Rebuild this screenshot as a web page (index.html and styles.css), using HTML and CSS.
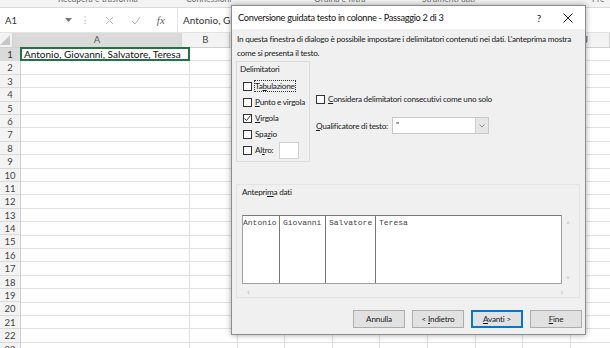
FILE: index.html
```html
<!DOCTYPE html>
<html lang="it">
<head>
    <meta charset="UTF-8">
    <meta name="viewport" content="width=device-width, initial-scale=1.0">
    <title>Conversione guidata testo in colonne</title>
    <link rel="stylesheet" href="styles.css">
</head>
<body>
    <div class="ribbon">
        <span class="grp g1">Recupera e trasforma</span>
        <span class="grp g2">Connessioni</span>
        <span class="grp g3">Ordina e filtra</span>
        <span class="grp g4">Strumenti dati</span>
        <span class="grp g5">Pre</span>
    </div>

    <div class="fbar">
        <div class="namebox">
            <span>A1</span>
            <svg width="7" height="4" viewBox="0 0 7 4"><path d="M0 0h7L3.5 4z" fill="#777"/></svg>
        </div>
        <span class="dots">⁝</span>
        <div class="fxbtns">
            <svg width="9" height="9" viewBox="0 0 9 9"><path d="M1 1l7 7M8 1L1 8" stroke="#b5b5b5" stroke-width="1"/></svg>
            <svg width="10" height="9" viewBox="0 0 10 9"><path d="M1 5l3 3 5-7" stroke="#b5b5b5" stroke-width="1" fill="none"/></svg>
            <span class="fx">fx</span>
        </div>
        <div class="finput">Antonio, Giovanni, Salvatore, Teresa</div>
    </div>

    <div class="colheads">
        <div class="corner"><svg width="10" height="10" viewBox="0 0 10 10"><path d="M10 0v10H0z" fill="#c8c8c8"/></svg></div>
        <div class="ch cha sel">A</div>
        <div class="ch">B</div>
        <div class="ch">C</div>
        <div class="ch">D</div>
        <div class="ch">E</div>
        <div class="ch">F</div>
        <div class="ch">G</div>
        <div class="ch">H</div>
        <div class="ch">I</div>
        <div class="ch">J</div>
    </div>

    <div class="sheet">
        <div class="rowheads">
            <div class="rh sel">1</div><div class="rh">2</div><div class="rh">3</div><div class="rh">4</div>
            <div class="rh">5</div><div class="rh">6</div><div class="rh">7</div><div class="rh">8</div>
            <div class="rh">9</div><div class="rh">10</div><div class="rh">11</div><div class="rh">12</div>
            <div class="rh">13</div><div class="rh">14</div><div class="rh">15</div><div class="rh">16</div>
            <div class="rh">17</div><div class="rh">18</div><div class="rh">19</div><div class="rh">20</div>
            <div class="rh">21</div><div class="rh">22</div><div class="rh">23</div>
        </div>
        <div class="cells">
            <div class="col cola">
                <div class="active">Antonio, Giovanni, Salvatore, Teresa</div>
            </div>
            <div class="col"></div><div class="col"></div><div class="col"></div><div class="col"></div>
            <div class="col"></div><div class="col"></div><div class="col"></div><div class="col"></div>
            <div class="col"></div>
        </div>
    </div>

    <div class="dialog">
        <div class="titlebar">
            <span class="title">Conversione guidata testo in colonne - Passaggio 2 di 3</span>
            <span class="help">?</span>
            <svg class="close" width="10" height="10" viewBox="0 0 10 10"><path d="M0.5 0.5l9 9M9.5 0.5l-9 9" stroke="#222" stroke-width="1"/></svg>
        </div>

        <p class="desc">In questa finestra di dialogo è possibile impostare i delimitatori contenuti nei dati. L'anteprima mostra come si presenta il testo.</p>

        <div class="options">
            <div class="group delim">
                <div class="glabel">Delimitatori</div>
                <label class="chk"><span class="box"></span><span class="focus">Ta<u>b</u>ulazione</span></label>
                <label class="chk"><span class="box"></span><span><u>P</u>unto e virgola</span></label>
                <label class="chk"><span class="box"><svg width="9" height="9" viewBox="0 0 9 9"><path d="M1.5 4.5l2 2 4-5" stroke="#222" stroke-width="0.9" fill="none"/></svg></span><span><u>V</u>irgola</span></label>
                <label class="chk"><span class="box"></span><span>Spa<u>z</u>io</span></label>
                <label class="chk"><span class="box"></span><span>Al<u>t</u>ro:</span><span class="other"></span></label>
            </div>
            <div class="side">
                <label class="chk"><span class="box"></span><span><u>C</u>onsidera delimitatori consecutivi come uno solo</span></label>
                <div class="qual">
                    <span class="qlabel"><u>Q</u>ualificatore di testo:</span>
                    <div class="combo">
                        <span class="cval">"</span>
                        <span class="carrow"><svg width="6" height="4" viewBox="0 0 6 4"><path d="M0.5 0.5l2.5 2.5 2.5-2.5" stroke="#777" stroke-width="0.8" fill="none"/></svg></span>
                    </div>
                </div>
            </div>
        </div>

        <div class="group preview">
            <div class="glabel">Antepri<u>m</u>a dati</div>
            <div class="pframe">
                <div class="pbox">
                    <div class="pcol w1">Antonio</div>
                    <div class="pcol w2">Giovanni</div>
                    <div class="pcol w3">Salvatore</div>
                    <div class="pcol last">Teresa</div>
                </div>
                <div class="vscroll"><span>˄</span><span>˅</span></div>
            </div>
            <div class="hscroll"><span>‹</span><span>›</span></div>
        </div>

        <div class="buttons">
            <button class="btn">Annulla</button>
            <button class="btn">&lt; <u>I</u>ndietro</button>
            <button class="btn def"><u>A</u>vanti &gt;</button>
            <button class="btn"><u>F</u>ine</button>
        </div>
    </div>
</body>
</html>
```

FILE: styles.css
```css
body {
    margin: 0;
    width: 610px;
    height: 348px;
    overflow: hidden;
    position: relative;
    background: #fff;
    font-family: "Lato", "Noto Sans", sans-serif;
    color: #222;
}

/* Ribbon strip (cut off) */
.ribbon {
    height: 7px;
    background: #f3f3f3;
    border-bottom: 1px solid #dadada;
    overflow: hidden;
    position: relative;
}
.grp {
    position: absolute;
    top: -6px;
    font-size: 8.5px;
    color: #6a6a6a;
}
.g1 { left: 58px; }
.g2 { left: 186px; }
.g3 { left: 314px; }
.g4 { left: 422px; }
.g5 { left: 592px; }

/* Formula bar */
.fbar {
    height: 24px;
    display: flex;
    align-items: center;
    background: #fff;
    border-bottom: 1px solid #e3e3e3;
}
.namebox {
    width: 76px;
    height: 17px;
    margin-left: 1px;
    display: flex;
    align-items: center;
    justify-content: space-between;
    padding: 0 5px 0 4px;
    box-sizing: border-box;
    font-size: 9.5px;
    color: #333;
}
.dots {
    width: 16px;
    text-align: center;
    color: #bbb;
    font-size: 10px;
}
.fxbtns {
    width: 76px;
    display: flex;
    align-items: center;
    justify-content: space-around;
    padding-left: 4px;
}
.fx {
    font-family: "Liberation Serif", serif;
    font-style: italic;
    font-size: 11px;
    color: #666;
}
.finput {
    margin-left: 4px;
    padding-left: 5px;
    border-left: 1px solid #e3e3e3;
    height: 24px;
    line-height: 24px;
    font-size: 10px;
    color: #333;
    white-space: nowrap;
}

/* Column headers */
.colheads {
    display: flex;
    height: 14px;
    background: #f3f3f3;
    border-bottom: 1px solid #cfcfcf;
}
.corner {
    width: 21px;
    box-sizing: border-box;
    border-right: 1px solid #d4d4d4;
    display: flex;
    align-items: flex-end;
    justify-content: flex-end;
    padding: 0 2px 2px 0;
}
.ch {
    width: 47.6px;
    flex: none;
    box-sizing: border-box;
    border-right: 1px solid #d4d4d4;
    text-align: center;
    font-size: 9.5px;
    line-height: 14px;
    color: #444;
}
.ch.cha { width: 169px; }
.ch.sel {
    background: #dadada;
    color: #555;
}

/* Sheet body */
.sheet {
    display: flex;
}
.rowheads {
    width: 21px;
    flex: none;
    background: #f3f3f3;
    border-right: 1px solid #cfcfcf;
    box-sizing: border-box;
}
.rh {
    height: 13.4px;
    box-sizing: border-box;
    border-bottom: 1px solid #dadada;
    font-size: 9.5px;
    line-height: 13px;
    text-align: center;
    color: #444;
}
.rh.sel {
    background: #dadada;
    color: #333;
}
.cells {
    flex: 1;
    display: flex;
    background: repeating-linear-gradient(to bottom, transparent 0 12.4px, #e1e1e1 12.4px 13.4px);
}
.col {
    width: 47.6px;
    flex: none;
    height: 310px;
    box-sizing: border-box;
    border-right: 1px solid #e1e1e1;
}
.col.cola { width: 169px; }
.active {
    height: 14.4px;
    margin: -1px -1px 0 -1px;
    border: 2px solid #217346;
    box-sizing: border-box;
    background: #fff;
    font-size: 10px;
    line-height: 10px;
    padding-left: 2px;
    color: #111;
    white-space: nowrap;
}

/* Dialog */
.dialog {
    position: absolute;
    left: 231px;
    top: 5px;
    width: 355px;
    height: 330px;
    box-sizing: border-box;
    background: #f0f0f0;
    border: 1px solid #8c8c8c;
    box-shadow: 0 0 6px rgba(0, 0, 0, 0.35);
    font-size: 8.2px;
    letter-spacing: -0.25px;
    color: #1a1a1a;
}
.titlebar {
    height: 23px;
    background: #fff;
    display: flex;
    align-items: center;
    padding: 0 12px 0 6px;
}
.title {
    flex: 1;
    font-size: 9.2px;
    letter-spacing: -0.3px;
    color: #111;
}
.help {
    font-size: 10px;
    margin-right: 22px;
}
.desc {
    margin: 0;
    padding: 3px 4px 0 5px;
    line-height: 14px;
}

.group {
    border: 1px solid #dcdcdc;
    box-sizing: border-box;
}
.glabel {
    line-height: 12px;
    padding-left: 3px;
}

.options {
    display: flex;
    margin: 1px 0 0 4px;
}
.delim {
    width: 74px;
    height: 101px;
    padding-top: 1px;
}
.delim .glabel { margin-bottom: 3px; }
.chk {
    display: flex;
    align-items: center;
    height: 16px;
    padding-left: 6px;
    white-space: nowrap;
}
.box {
    width: 9px;
    height: 9px;
    flex: none;
    box-sizing: border-box;
    border: 1px solid #333;
    background: #fff;
    margin-right: 3px;
    display: flex;
}
.box svg { margin: -1px; }
.focus {
    outline: 1px dotted #333;
    outline-offset: 0;
}
.other {
    width: 20px;
    height: 17px;
    background: #fff;
    border: 1px solid #d0d0d0;
    box-sizing: border-box;
    margin-left: 6px;
}

.side {
    margin: 30px 0 0 6px;
}
.side .chk { padding-left: 0; }
.qual {
    display: flex;
    align-items: center;
    margin-top: 10px;
}
.qlabel {
    width: 76px;
    white-space: nowrap;
}
.combo {
    width: 97px;
    height: 17px;
    background: #fff;
    border: 1px solid #c8c8c8;
    box-sizing: border-box;
    display: flex;
    justify-content: space-between;
}
.cval { padding: 2px 0 0 3px; }
.carrow {
    width: 12px;
    background: #e6e6e6;
    border-left: 1px solid #d0d0d0;
    display: flex;
    align-items: center;
    justify-content: center;
}

.preview {
    margin: 22px 5px 0 4px;
    height: 114px;
    padding: 0 5px 0 5px;
    border-color: #e4e4e4;
}
.preview .glabel { padding: 1px 0 0 0; margin-bottom: 17px; }
.pframe {
    display: flex;
}
.pbox {
    width: 322px;
    height: 69px;
    box-sizing: border-box;
    background: #fff;
    border: 1px solid #a0a0a0;
    border-top-color: #7a7a7a;
    display: flex;
    font-family: "Liberation Mono", monospace;
    font-size: 8px;
    letter-spacing: 0;
    color: #444;
}
.pcol {
    border-right: 1px solid #777;
    padding: 2px 0 0 0;
    box-sizing: border-box;
}
.pcol.w1 { width: 37px; }
.pcol.w2 { width: 46px; padding-left: 3px; }
.pcol.w3 { width: 50px; padding-left: 3px; }
.pcol.last { border-right: 0; padding-left: 3px; }
.vscroll {
    width: 12px;
    display: flex;
    flex-direction: column;
    justify-content: space-between;
    align-items: center;
    color: #b5b5b5;
    font-size: 8px;
    padding: 4px 0 0 0;
}
.hscroll {
    display: flex;
    justify-content: space-between;
    width: 316px;
    padding: 1px 0 0 5px;
    color: #b5b5b5;
    font-size: 10px;
    line-height: 12px;
}

.buttons {
    display: flex;
    justify-content: flex-end;
    gap: 7px;
    margin: 12px 3px 0 0;
}
.btn {
    width: 52px;
    height: 18px;
    padding: 0;
    background: #e1e1e1;
    border: 1px solid #adadad;
    font-family: inherit;
    font-size: 8.2px;
    letter-spacing: -0.2px;
    color: #1a1a1a;
}
.btn.def {
    border: 1px solid #0078d7;
    box-shadow: inset 0 0 0 1px #0078d7;
}
```
